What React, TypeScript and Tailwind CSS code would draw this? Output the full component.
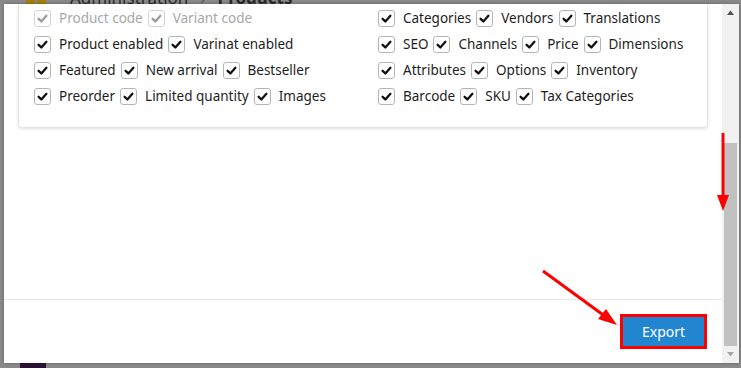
import React from 'react';

const font = { fontFamily: '"Noto Sans", "Open Sans", sans-serif' };

function Check({ disabled }: { disabled?: boolean }) {
  return (
    <span
      className={
        'inline-flex h-[17px] w-[17px] shrink-0 items-center justify-center rounded-[3px] border bg-white ' +
        (disabled ? 'border-[#d4d4d5]' : 'border-[#b5b5b5]')
      }
    >
      <svg width="13" height="13" viewBox="0 0 16 16">
        <path
          d="M3.2 8.4 L6.6 11.6 L12.8 4.6"
          fill="none"
          stroke={disabled ? '#9a9a9a' : '#111'}
          strokeWidth="2.8"
          strokeLinecap="round"
          strokeLinejoin="round"
        />
      </svg>
    </span>
  );
}

function Row({ items, disabled }: { items: string[]; disabled?: boolean }) {
  return (
    <div className="flex h-[26px] items-center gap-[5px]">
      {items.map((label) => (
        <label key={label} className="flex items-center gap-[8px]">
          <Check disabled={disabled} />
          <span className={disabled ? 'text-[#a8a8a8]' : 'text-[#1e1e1e]'}>{label}</span>
        </label>
      ))}
    </div>
  );
}

const leftRows = [
  ['Product enabled', 'Varinat enabled'],
  ['Featured', 'New arrival', 'Bestseller'],
  ['Preorder', 'Limited quantity', 'Images'],
];
const rightRows = [
  ['Categories', 'Vendors', 'Translations'],
  ['SEO', 'Channels', 'Price', 'Dimensions'],
  ['Attributes', 'Options', 'Inventory'],
  ['Barcode', 'SKU', 'Tax Categories'],
];

export default function App() {
  return (
    <div className="relative h-[368px] w-[741px] overflow-hidden bg-[#8b8b8b] text-[13.5px]" style={font}>
      {/* page behind the dimmer */}
      <div className="flex h-[8px] items-end overflow-hidden pl-[26px]">
        <div className="flex gap-[2px]">
          <span className="h-[14px] w-[9px] rounded-full bg-[#a7820e]" />
          <span className="h-[14px] w-[9px] rounded-full bg-[#a7820e]" />
        </div>
        <div className="ml-[24px] flex shrink-0 items-end gap-3 text-[17px] leading-[20px] text-[#2a2a2a]">
          <span>Administration</span>
          <span className="text-[#555]">›</span>
          <span className="font-bold">Products</span>
        </div>
      </div>
      <div className="ml-[20px] mt-[352px] h-[8px] w-[26px] bg-[#2b1433]" />

      {/* modal */}
      <div className="absolute left-[4px] top-[4px] flex h-[359px] w-[735px] bg-white shadow-[0_0_4px_rgba(0,0,0,0.3)]">
        <div className="flex flex-1 flex-col">
          <div className="flex-1 px-[14px]">
            <div className="grid grid-cols-2 rounded-b-[4px] border-x border-b border-[#e4e4e4] pb-[18px] shadow-[0_1px_3px_rgba(0,0,0,0.12)]">
              <div className="pl-[15px] pt-[1px]">
                <Row items={['Product code', 'Variant code']} disabled />
                {leftRows.map((r) => (
                  <Row key={r[0]} items={r} />
                ))}
              </div>
              <div className="pl-[15px] pt-[1px]">
                {rightRows.map((r) => (
                  <Row key={r[0]} items={r} />
                ))}
              </div>
            </div>
          </div>
          <div className="flex h-[64px] items-center justify-end border-t border-[#e6e6e6] pr-[15px]">
            <button className="h-[35px] w-[87px] border-[3px] border-[#ff0000] bg-[#2185d0] text-[14px] text-white">
              Export
            </button>
          </div>
        </div>
        {/* scrollbar */}
        <div className="flex w-[17px] flex-col items-center bg-[#f1f1f1]">
          <svg width="17" height="17" viewBox="0 0 17 17">
            <path d="M5 11 L8.5 6.5 L12 11 Z" fill="#505050" />
          </svg>
          <div className="mt-[122px] w-[13px] flex-1 bg-[#c1c1c1]" />
          <svg width="17" height="17" viewBox="0 0 17 17">
            <path d="M5 6 L8.5 10.5 L12 6 Z" fill="#a3a3a3" />
          </svg>
        </div>
      </div>

      {/* red annotation arrows */}
      <svg className="pointer-events-none absolute left-0 top-0" width="741" height="368">
        <line x1="543" y1="271" x2="606" y2="317" stroke="#ff0000" strokeWidth="3" />
        <path d="M617 325 L598 319 L606 309 Z" fill="#ff0000" />
        <line x1="723" y1="133" x2="723" y2="198" stroke="#ff0000" strokeWidth="3" />
        <path d="M723 211 L717 195 L729 195 Z" fill="#ff0000" />
      </svg>
    </div>
  );
}
